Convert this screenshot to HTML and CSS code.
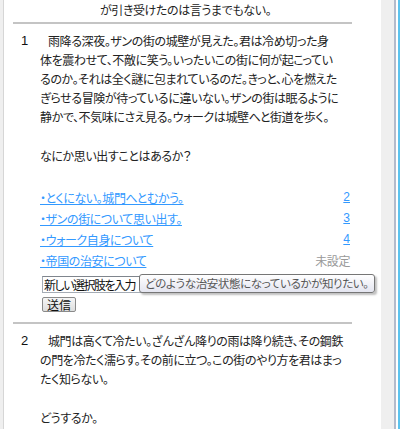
FILE: index.html
```html
<!doctype html>
<html>
  <head>
    <meta charset="utf-8">
    <title>ゲームブック</title>
    <meta name="viewport" content="width=device-width, initial-scale=1">
    <link rel="stylesheet" href="styles.css">
  </head>
  <body>
    <div class="window">
      <div class="frame-left"></div>

      <main class="log">
        <p class="tail">が引き受けたのは言うまでもない。</p>

        <section class="entry">
          <div class="num">1</div>
          <div class="body">
            <p class="text">雨降る深夜。ザンの街の城壁が見えた。君は冷め切った身<br>体を震わせて、不敵に笑う。いったいこの街に何が起こってい<br>るのか。それは全く謎に包まれているのだ。きっと、心を燃えた<br>ぎらせる冒険が待っているに違いない。ザンの街は眠るように<br>静かで、不気味にさえ見る。ウォークは城壁へと街道を歩く。</p>
            <p class="question">なにか思い出すことはあるか？</p>

            <ul class="choices">
              <li><a href="#">・とくにない。城門へとむかう。</a><a class="goto" href="#">2</a></li>
              <li><a href="#">・ザンの街について思い出す。</a><a class="goto" href="#">3</a></li>
              <li><a href="#">・ウォーク自身について</a><a class="goto" href="#">4</a></li>
              <li><a href="#">・帝国の治安について</a><span class="unset">未設定</span></li>
            </ul>

            <form class="add-choice">
              <input type="text" value="新しい選択肢を入力">
              <div class="tooltip">どのような治安状態になっているかが知りたい。</div>
              <button type="button">送信</button>
            </form>
          </div>
        </section>

        <section class="entry">
          <div class="num">2</div>
          <div class="body">
            <p class="text">城門は高くて冷たい。ざんざん降りの雨は降り続き、その鋼鉄<br>の門を冷たく濡らす。その前に立つ。この街のやり方を君はまっ<br>たく知らない。</p>
            <p class="question">どうするか。</p>
          </div>
        </section>
      </main>

      <div class="scroll">
        <div class="scroll-track"></div>
        <div class="scroll-edge"></div>
      </div>
    </div>
  </body>
</html>
```

FILE: styles.css
```css
body {
  margin: 0;
  padding: 0;
  background-color: #fff;
  font-family: "Noto Sans CJK JP", "Noto Sans", sans-serif;
  font-size: 12px;
  letter-spacing: -0.4px;
  color: #222;
  font-feature-settings: "palt";
}
.window {
  display: flex;
  height: 429px;
  overflow: hidden;
}
.frame-left {
  width: 3px;
  background-color: #efefef;
  border-right: 1px solid #d6d6d6;
}
.log {
  flex: 1;
  min-width: 0;
}
p {
  margin: 0;
}
.tail {
  line-height: 19px;
  padding-left: 96px;
  margin-bottom: 3px;
}
.entry {
  display: flex;
  margin: 0 29px 0 9px;
  padding: 7px 2px 10px 0;
  border-top: 2px solid #c4c4c4;
}
.num {
  width: 27px;
  box-sizing: border-box;
  padding-left: 8px;
  line-height: 19px;
  font-family: "Liberation Sans", sans-serif;
  font-size: 13px;
  letter-spacing: 0;
  color: #111;
}
.body {
  flex: 1;
  min-width: 0;
}
.text {
  line-height: 19px;
  text-indent: 8px;
  white-space: nowrap;
}
.question {
  line-height: 19px;
  margin-top: 20px;
}
.choices {
  list-style: none;
  margin: 22px 0 0 0;
  padding: 0;
}
.choices li {
  display: flex;
  justify-content: space-between;
  line-height: 21px;
}
.choices a {
  color: #3399ff;
  text-decoration: underline;
}
.goto {
  font-family: "Liberation Sans", sans-serif;
  letter-spacing: 0;
}
.unset {
  color: #999;
}
.add-choice {
  position: relative;
  margin: 5px 0 0 2px;
}
.add-choice input {
  display: block;
  box-sizing: border-box;
  width: 130px;
  height: 17px;
  padding: 0 1px;
  border: 1px solid #a5acb5;
  border-top-color: #7f858d;
  font-family: inherit;
  font-size: 12px;
  letter-spacing: -1.5px;
  font-feature-settings: "palt";
  color: #111;
}
.add-choice button {
  display: block;
  margin-top: 4px;
  height: 15px;
  width: 34px;
  padding: 0;
  border: 1px solid #8a8a8a;
  border-radius: 2px;
  background: linear-gradient(#f6f6f6, #dedede);
  font-family: inherit;
  font-size: 12px;
  line-height: 12px;
  color: #111;
}
.tooltip {
  position: absolute;
  left: 97px;
  top: -2px;
  height: 17px;
  padding: 0 5px;
  border: 1px solid #767676;
  border-radius: 3px;
  background: linear-gradient(#fff, #e4e5f0);
  box-shadow: 2px 2px 2px rgba(0, 0, 0, 0.25);
  font-size: 11.5px;
  line-height: 17px;
  white-space: nowrap;
  color: #575757;
}
.scroll {
  display: flex;
  width: 19px;
}
.scroll-track {
  width: 13px;
  background-color: #efefef;
  border-right: 2px solid #b3bbcb;
}
.scroll-edge {
  flex: 1;
  border-left: 2px solid #fff;
  background-color: #5cc3ee;
}
```
